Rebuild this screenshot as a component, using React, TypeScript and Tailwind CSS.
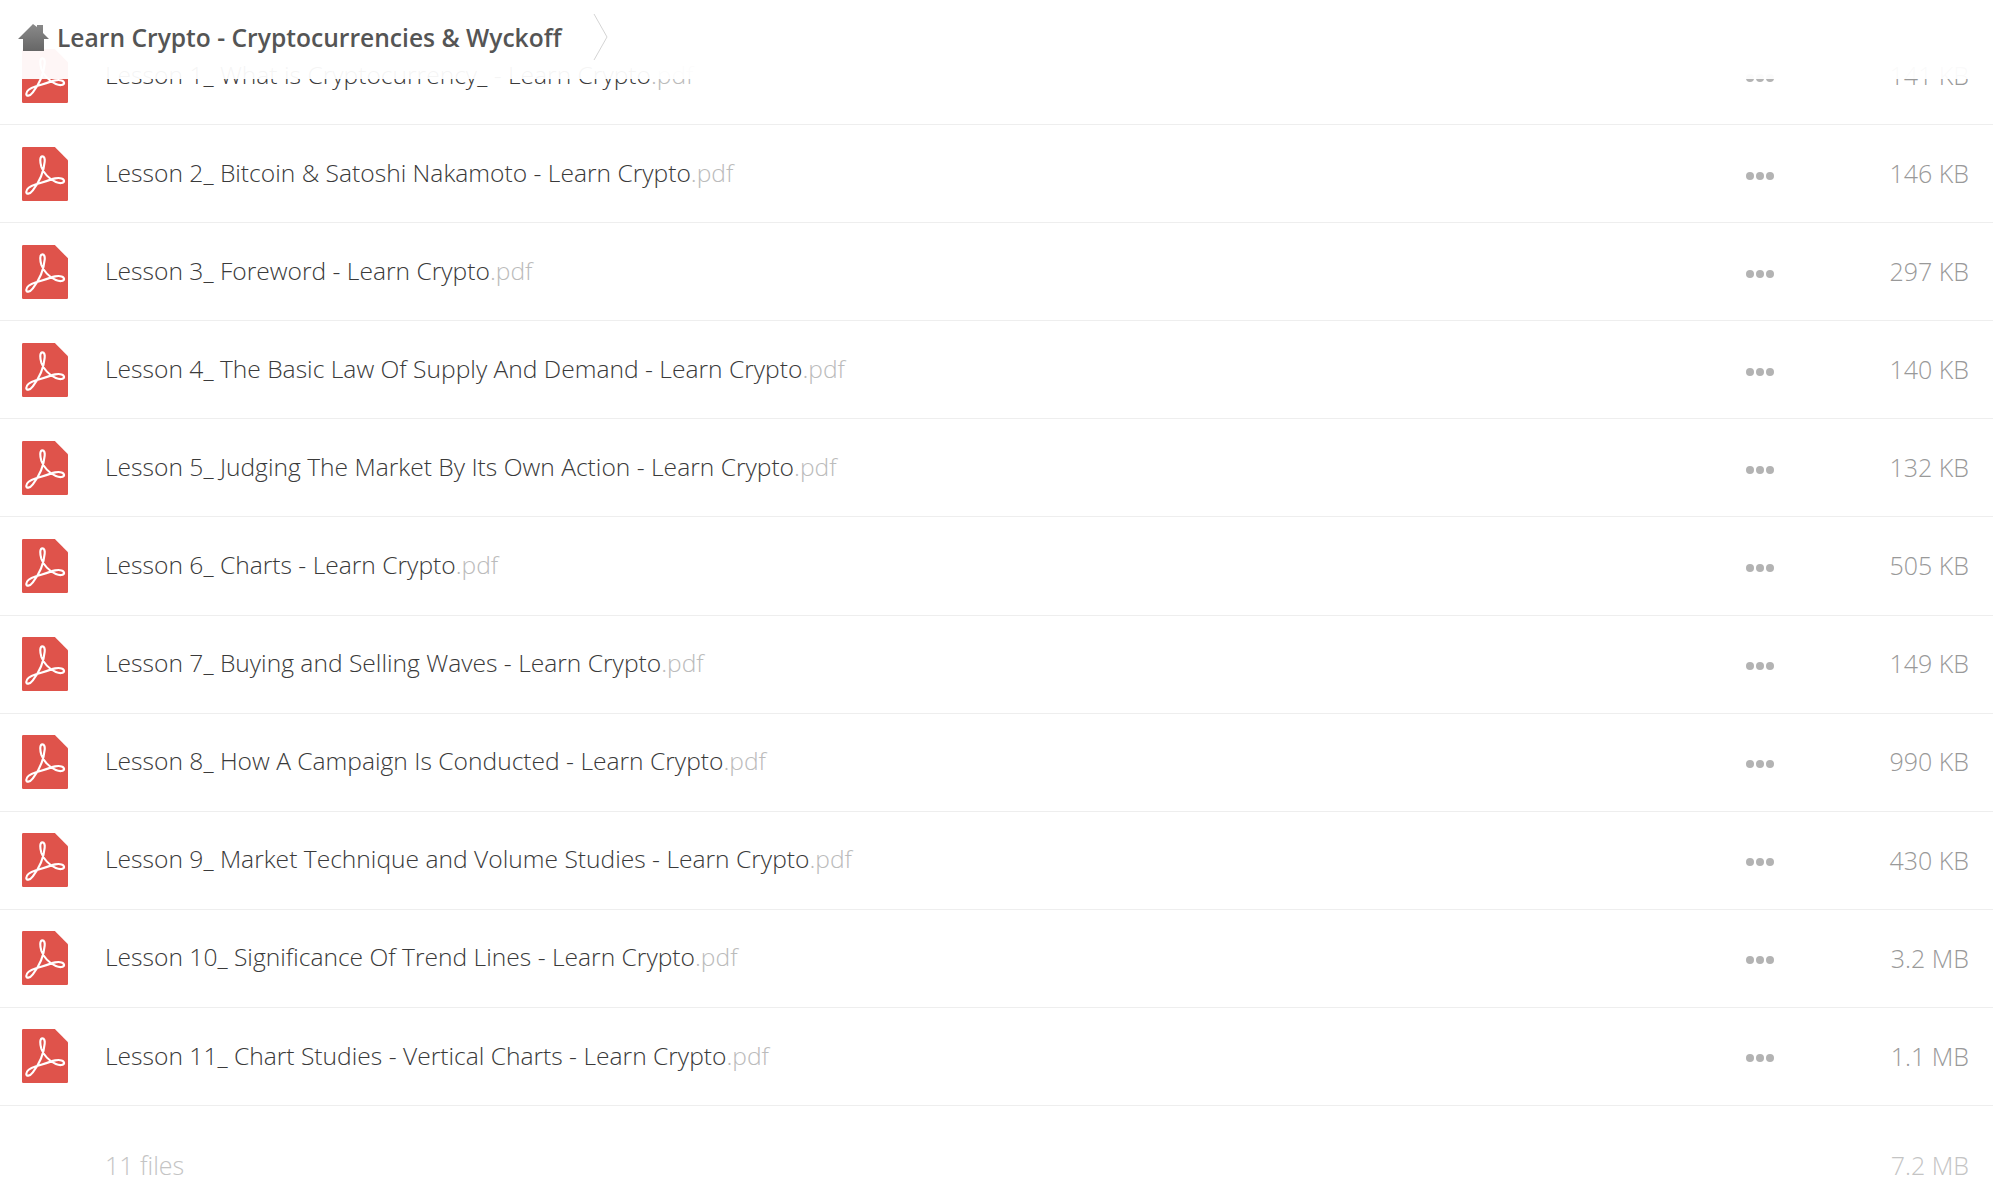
const files = [
    { name: "Lesson 1_ What is Cryptocurrency_ - Learn Crypto", size: "141 KB" },
    { name: "Lesson 2_ Bitcoin & Satoshi Nakamoto - Learn Crypto", size: "146 KB" },
    { name: "Lesson 3_ Foreword - Learn Crypto", size: "297 KB" },
    { name: "Lesson 4_ The Basic Law Of Supply And Demand - Learn Crypto", size: "140 KB" },
    { name: "Lesson 5_ Judging The Market By Its Own Action - Learn Crypto", size: "132 KB" },
    { name: "Lesson 6_ Charts - Learn Crypto", size: "505 KB" },
    { name: "Lesson 7_ Buying and Selling Waves - Learn Crypto", size: "149 KB" },
    { name: "Lesson 8_ How A Campaign Is Conducted - Learn Crypto", size: "990 KB" },
    { name: "Lesson 9_ Market Technique and Volume Studies - Learn Crypto", size: "430 KB" },
    { name: "Lesson 10_ Significance Of Trend Lines - Learn Crypto", size: "3.2 MB" },
    { name: "Lesson 11_ Chart Studies - Vertical Charts - Learn Crypto", size: "1.1 MB" },
];

const PdfIcon = () => (
    <svg width="46" height="54" viewBox="35 48 140 162" preserveAspectRatio="none" className="shrink-0">
        <path
            d="M39 48H135L175 88V206a4 4 0 0 1-4 4H39a4 4 0 0 1-4-4V52a4 4 0 0 1 4-4Z"
            fill="#df534b"
        />
        <path
            d="M97 76C103 76 105 84 104 92C102 115 90 150 68 178C58 191 48 190 48 183C48 174 62 165 78 160C100 153 120 146 136 142C152 139 163 143 163 150C163 157 150 158 138 153C118 145 100 125 94 108C90 95 88 76 97 76Z"
            fill="none"
            stroke="#fff"
            strokeWidth="6.5"
        />
    </svg>
);

const HomeIcon = () => (
    <svg width="31" height="27" viewBox="0 0 31 27" className="shrink-0">
        <defs>
            <linearGradient id="home" x1="0" y1="0" x2="0" y2="1">
                <stop offset="0" stopColor="#8a8a8a" />
                <stop offset="1" stopColor="#666" />
            </linearGradient>
        </defs>
        <path
            d="M0 15L15 0L19 3V1H25V9L31 15H26V27H5V15Z"
            fill="url(#home)"
        />
    </svg>
);

const Dots = () => (
    <div className="flex w-[28px] shrink-0 justify-between mt-[4px]">
        <span className="h-[8px] w-[8px] rounded-full bg-[#b3b3b3]" />
        <span className="h-[8px] w-[8px] rounded-full bg-[#b3b3b3]" />
        <span className="h-[8px] w-[8px] rounded-full bg-[#b3b3b3]" />
    </div>
);

const App = () => {
    return (
        <div
            className="relative h-[1185px] overflow-hidden bg-white pt-[27px]"
            style={{ fontFamily: '"Open Sans", sans-serif' }}
        >
            <div className="absolute inset-x-0 top-0 z-10 flex h-[79px] bg-white/95 pl-[18px] pt-[14px]">
                <div className="flex h-[46px] items-center">
                    <HomeIcon />
                    <span className="ml-[8px] mt-[2px] text-[24.6px] font-semibold text-[#555]">
                        Learn Crypto - Cryptocurrencies &amp; Wyckoff
                    </span>
                    <svg width="15" height="46" viewBox="0 0 15 46" className="ml-[31px]">
                        <path d="M1 0L14 23L1 46" fill="none" stroke="#d4d4d4" />
                    </svg>
                </div>
            </div>

            {files.map((file) => (
                <div
                    key={file.name}
                    className="flex h-[98.1px] items-center border-b border-[#eee] pl-[22px] pr-[24px]"
                >
                    <PdfIcon />
                    <div className="ml-[37px] mb-[1px] flex-1 text-[24.6px] font-light text-[#3a3a3a]">
                        {file.name}
                        <span className="text-[#bbb]">.pdf</span>
                    </div>
                    <Dots />
                    <div className="w-[195px] text-right text-[25px] font-light text-[#999]">
                        {file.size}
                    </div>
                </div>
            ))}

            <div className="flex h-[119px] items-center pl-[105px] pr-[24px] text-[25px] font-light text-[#c4c4c4]">
                <div className="flex-1">11 files</div>
                <div>7.2 MB</div>
            </div>
        </div>
    );
};

export default App;
